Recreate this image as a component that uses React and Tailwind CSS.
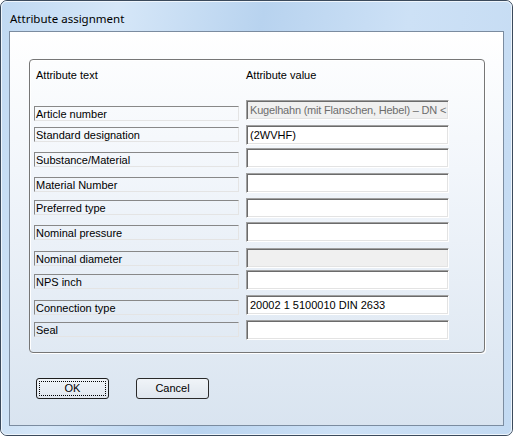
import React from "react";

const rows = [
  { label: "Article number", value: "Kugelhahn (mit Flanschen, Hebel) – DN <", disabled: true, h: 25, lt: 6, tight: true },
  { label: "Standard designation", value: "(2WVHF)", h: 23, lt: 2 },
  { label: "Substance/Material", value: "", h: 25, lt: 4 },
  { label: "Material Number", value: "", h: 25, lt: 4 },
  { label: "Preferred type", value: "", h: 24, lt: 2 },
  { label: "Nominal pressure", value: "", h: 26, lt: 3 },
  { label: "Nominal diameter", value: "", disabled: true, h: 22, lt: 3 },
  { label: "NPS inch", value: "", h: 25, lt: 4 },
  { label: "Connection type", value: "20002 1 5100010 DIN 2633", h: 25, lt: 5 },
  { label: "Seal", value: "", h: 20, lt: 2 },
];

function Row({ r }) {
  return (
    <div className="flex items-start" style={{ height: r.h }}>
      <div
        className="w-[205px] h-[15px] border-t border-l border-t-[#888888] border-l-[#888888] border-b border-r border-b-[#e4e4e4] border-r-[#e4e4e4] pl-[1px] text-[11px] leading-[15px] text-black whitespace-nowrap overflow-hidden"
        style={{ marginTop: r.lt }}
      >
        {r.label}
      </div>
      <div
        className={
          "ml-[7px] w-[203px] h-[20px] border border-t-[#a0a0a0] border-l-[#a0a0a0] border-b-white border-r-white shadow-[inset_1px_1px_0_#6b6b6b,inset_-1px_-1px_0_#e3e3e3] pl-[3px] text-[11px] leading-[18px] whitespace-nowrap overflow-hidden " +
          (r.disabled ? "bg-[#f0f0f0] text-[#6d6d6d]" : "bg-white text-black") +
          (r.tight ? " tracking-[-0.2px]" : "")
        }
      >
        {r.value}
      </div>
    </div>
  );
}

export default function App() {
  return (
    <div className="w-[513px] h-[436px] bg-white" style={{ fontFamily: '"Liberation Sans", Arial, sans-serif' }}>
      <div className="w-[513px] h-[436px] rounded-[7px] border border-[#3b4a5c] bg-[linear-gradient(100deg,#c0d9f2_0%,#d6e7f8_20%,#b8d3ef_45%,#cde1f6_70%,#c3daf2_100%)]">
        <div className="h-full rounded-[6px] border border-[#eef5fc] flex flex-col">
          <div className="h-[29px] pl-[8px] pt-[10px] text-[11.5px] leading-[14px] text-black" style={{ fontFamily: '"Noto Sans", "Liberation Sans", sans-serif' }}>
            Attribute assignment
          </div>
          <div className="mx-[7px] mb-[8px] flex-1 border border-[#7b8ca0] bg-[linear-gradient(to_bottom,#ffffff_0%,#f2f6fb_35%,#d9e4f0_100%)] flex flex-col">
            <div className="ml-[19px] mt-[27px] w-[456px] h-[294px] rounded-[4px] border border-[#767676] shadow-[1px_1px_0_#ffffff,inset_1px_1px_0_#ffffff] flex flex-col pl-[4px]">
              <div className="mt-[8px] h-[14px] flex text-[11px] leading-[14px] text-black">
                <div className="w-[205px] pl-[2px]">Attribute text</div>
                <div className="ml-[7px]">Attribute value</div>
              </div>
              <div className="mt-[18px] flex flex-col">
                {rows.map((r) => (
                  <Row key={r.label} r={r} />
                ))}
              </div>
            </div>
            <div className="mt-[25px] ml-[26px] flex gap-[27px]">
              <button className="relative w-[73px] h-[21px] rounded-[3px] border border-[#1e1e1e] bg-[linear-gradient(to_bottom,#f0f4f8,#dfe6ee)] text-[11px] leading-[19px] text-black">
                <span className="absolute inset-[2px] rounded-[1px] border border-dotted border-black" />
                OK
              </button>
              <button className="w-[73px] h-[21px] rounded-[3px] border border-[#2a2a2a] bg-[linear-gradient(to_bottom,#f0f4f8,#dfe6ee)] text-[11px] leading-[19px] text-black">
                Cancel
              </button>
            </div>
          </div>
        </div>
      </div>
    </div>
  );
}
